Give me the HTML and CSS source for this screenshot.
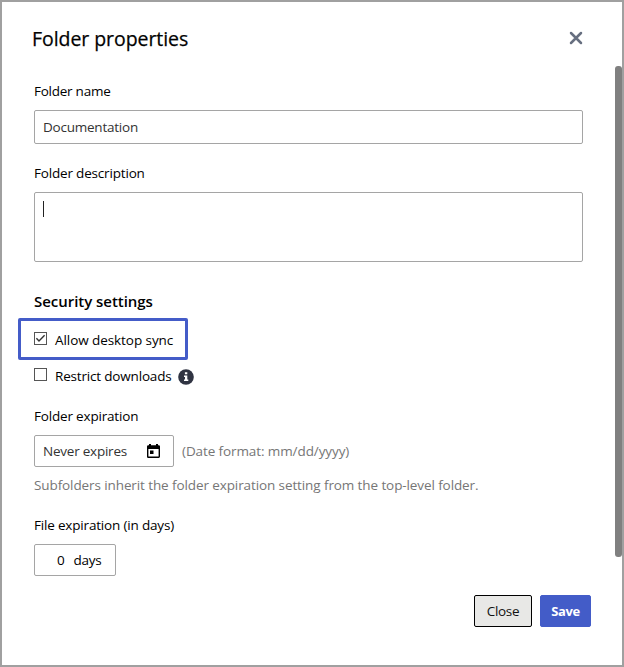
FILE: index.html
```html
<!DOCTYPE html>
<html lang="en">
<head>
<meta charset="utf-8">
<title>Folder properties</title>
<link rel="stylesheet" href="styles.css">
</head>
<body>
<main class="dialog">
  <header class="header">
    <h1 class="title">Folder properties</h1>
    <svg class="close-icon" width="14" height="14" viewBox="0 0 14 14"><path d="M2 2L12 12M12 2L2 12"/></svg>
  </header>
  <div class="body">
    <form class="form">
      <label class="label name-label">Folder name</label>
      <div class="field name">Documentation</div>
      <label class="label desc-label">Folder description</label>
      <div class="field description"><i class="caret"></i></div>
      <h2 class="heading">Security settings</h2>
      <div class="check highlight">
        <svg class="box" width="13" height="13" viewBox="0 0 13 13"><rect x=".5" y=".5" width="12" height="12"/><path d="M2.4 6.3L5 9L10.6 3.3"/></svg>
        <span class="allow">Allow desktop sync</span>
      </div>
      <div class="check">
        <svg class="box" width="13" height="13" viewBox="0 0 13 13"><rect x=".5" y=".5" width="12" height="12"/></svg>
        <span>Restrict downloads</span>
        <svg class="info" width="16" height="16" viewBox="0 0 16 16"><circle cx="8" cy="8" r="7.8"/><path d="M6.9 3.3h2.4v2H6.9zM6 6.5h3.3v4.1h1v1.5H6v-1.5h1V8H6z"/></svg>
      </div>
      <label class="label expiry-label">Folder expiration</label>
      <div class="date-row">
        <div class="field date"><span>Never expires</span>
          <svg width="13" height="14" viewBox="0 0 13 14"><path fill-rule="evenodd" d="M2 0h2v1.3h5V0h2v1.3h.7Q13 1.3 13 2.6v10Q13 14 11.7 14H1.3Q0 14 0 12.7V2.6Q0 1.3 1.3 1.3H2zM1.4 5v7.6h10.2V5zM3 6.5h3.5V10H3z"/></svg>
        </div>
        <span class="hint">(Date format: mm/dd/yyyy)</span>
      </div>
      <p class="help">Subfolders inherit the folder expiration setting from the top-level folder.</p>
      <label class="label file-label">File expiration (in days)</label>
      <div class="field days"><span>0</span><span>days</span></div>
    </form>
    <div class="scrollbar"></div>
  </div>
  <footer class="footer">
    <button class="button secondary">Close</button>
    <button class="button primary">Save</button>
  </footer>
</main>
</body>
</html>
```
FILE: styles.css
```css
* { box-sizing: border-box; }
body { margin: 0; font: 13.5px/20px "Open Sans", "Noto Sans", sans-serif; letter-spacing: -.18px; color: #000; background: #fff; }
.dialog { width: 624px; height: 667px; border: 2px solid #a0a0a0; display: flex; flex-direction: column; }
.header { height: 64px; padding: 0 38px 0 30px; display: flex; align-items: center; justify-content: space-between; flex: none; }
.title { margin: 10px 0 0; font-size: 19.5px; line-height: 28px; font-weight: 400; letter-spacing: -.06px; -webkit-text-stroke: .25px #111; }
.close-icon { margin: 8px 1px 0 0; fill: none; stroke: #676f80; stroke-width: 2.5; stroke-linecap: round; }
.body { display: flex; flex: none; }
.form { width: 581px; padding-left: 32px; flex: none; margin: 0; }
.label { display: block; height: 20px; white-space: nowrap; }
.name-label { margin-top: 15px; letter-spacing: -.25px; }
.field { border: 1px solid #a5a5a5; border-radius: 2px; display: flex; align-items: center; padding: 0 8px; white-space: nowrap; color: #333; letter-spacing: -.23px; }
.name { height: 34px; margin-top: 9px; }
.desc-label { margin-top: 19px; }
.description { height: 70px; margin-top: 9px; align-items: flex-start; }
.caret { width: 1px; height: 16px; margin: 8px 0 0; background: #222; }
.heading { margin: 29px 0 7px; font-size: 15px; line-height: 20px; font-weight: 600; letter-spacing: -.04px; }
.check { height: 20px; display: flex; align-items: center; white-space: nowrap; }
.allow { letter-spacing: -.07px; }
.box { fill: #fff; stroke: #555; stroke-width: 1; margin: 0 8px 3px 0; }
.box path { fill: none; stroke: #333; stroke-width: 1.4; }
.info { fill: #303442; margin: 1px 0 0 7px; }
.info path { fill: #fff; }
.highlight { width: 170px; height: 42px; border: 3px solid #445cc8; border-radius: 2px; margin: 0 0 6px -16px; padding: 2px 0 0 13px; }
.expiry-label { margin-top: 20px; }
.date-row { display: flex; align-items: center; gap: 8px; margin-top: 9px; }
.date { width: 140px; height: 32px; justify-content: space-between; padding-right: 13px; }
.date svg { fill: #000; }
.hint, .help { color: #767676; white-space: nowrap; letter-spacing: -.1px; }
.help { margin: 8px 0 0; }
.file-label { margin-top: 20px; }
.days { width: 82px; height: 32px; margin-top: 9px; padding: 0 14px 0 22px; gap: 9px; color: #000; }
.scrollbar { width: 7px; height: 491px; margin-left: 32px; border-radius: 3px; background: #808080; }
.footer { display: flex; justify-content: flex-end; gap: 8px; padding: 19px 31px 0 0; }
.button { height: 32px; padding: 0; border-radius: 2px; font: inherit; letter-spacing: -.35px; border: 1px solid #000; }
.secondary { width: 58px; background: #e8e8e6; color: #111; }
.primary { width: 51px; background: #435cc8; border-color: #435cc8; color: #fff; font-size: 13px; font-weight: 700; }
```
